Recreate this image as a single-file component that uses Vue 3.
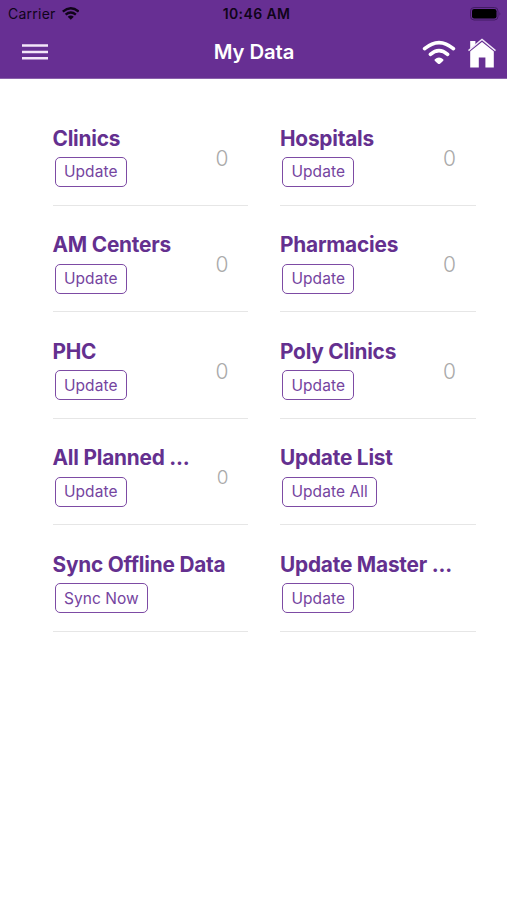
<script setup>
const items = [
  { title: 'Clinics', action: 'Update', count: 0 },
  { title: 'Hospitals', action: 'Update', count: 0 },
  { title: 'AM Centers', action: 'Update', count: 0 },
  { title: 'Pharmacies', action: 'Update', count: 0 },
  { title: 'PHC', action: 'Update', count: 0 },
  { title: 'Poly Clinics', action: 'Update', count: 0 },
  { title: 'All Planned ...', action: 'Update', count: 0, small: true },
  { title: 'Update List', action: 'Update All' },
  { title: 'Sync Offline Data', action: 'Sync Now' },
  { title: 'Update Master ...', action: 'Update' },
]
</script>

<template>
  <div class="screen">
    <header class="header">
      <div class="status">
        <div class="carrier">
          <span>Carrier</span>
          <svg class="signal" viewBox="0 0 34 25">
            <path d="M1.5 9Q17 -4 32.5 9M7 15Q17 6.6 27 15" fill="none" stroke="currentColor" stroke-width="4.8" />
            <path d="M11 19Q17 14 23 19L17 25Z" fill="currentColor" />
          </svg>
        </div>
        <span class="time">10:46 AM</span>
        <svg class="battery" viewBox="0 0 32 14">
          <rect x="0.5" y="0.5" width="27.5" height="12.5" rx="3.6" fill="none" stroke="#431c64" />
          <rect x="2" y="2" width="24.5" height="9.5" rx="2.2" fill="#000" />
          <path d="M29.5 4.8Q31.2 6.8 29.5 8.8Z" fill="#431c64" />
        </svg>
      </div>
      <nav class="bar">
        <button class="menu" aria-label="Menu">
          <svg viewBox="0 0 26 18">
            <path d="M0 2.4H26M0 8.9H26M0 15.2H26" fill="none" stroke="#f3e6f9" stroke-width="2.5" />
          </svg>
        </button>
        <h1>My Data</h1>
        <div class="tools">
          <svg class="wifi" viewBox="0 0 34 25">
            <path d="M2.6 8.7Q17 -3.6 31.4 8.7M8.4 14.4Q17 6.8 25.6 14.4" fill="none" stroke="currentColor" stroke-width="3.6" stroke-linecap="round" />
            <path d="M12.6 19.4Q17 15.8 21.4 19.4Q21.8 20.2 21 21L18 23.7Q17 24.4 16 23.7L13 21Q12.2 20.2 12.6 19.4Z" fill="currentColor" />
          </svg>
          <svg class="home" viewBox="0 0 28 30">
            <path d="M2.2 15V3H7.4V8L14 3L25.8 13V29.5H17.4V19.5H10.8V29.5H2.2Z" fill="currentColor" />
            <path d="M0.5 13.6L14 2.8L27.5 13.6" fill="none" stroke="#672f93" stroke-width="1.8" />
            <path d="M0.5 12.6L14 1.5L27.5 12.6" fill="none" stroke="#f3eaf8" stroke-width="1.4" />
          </svg>
        </div>
      </nav>
    </header>

    <main class="grid">
      <section v-for="item in items" :key="item.title" class="cell">
        <div class="info">
          <h2>{{ item.title }}</h2>
          <button class="action">{{ item.action }}</button>
        </div>
        <span v-if="item.count !== undefined" class="count" :class="{ small: item.small }">{{ item.count }}</span>
      </section>
    </main>
  </div>
</template>

<style>
body {
  background: #fff;
}
</style>

<style scoped>
.screen {
  height: 900px;
  overflow: hidden;
  background: #fff;
  font-family: Inter, "Liberation Sans", sans-serif;
}

button {
  margin: 0;
  padding: 0;
  border: 0;
  background: none;
  font-family: inherit;
}

.header {
  height: 79px;
  background: #672f93;
  box-sizing: border-box;
  border-bottom: 1px solid #8a61aa;
  color: #fff;
}

.status {
  display: grid;
  grid-template-columns: 1fr auto 1fr;
  align-items: center;
  height: 27px;
  padding: 0 5px 0 8px;
  color: #100419;
  font-size: 14px;
}

.carrier {
  display: flex;
  align-items: center;
  gap: 6px;
  letter-spacing: 0.25px;
}

.signal {
  width: 17.5px;
  height: 12.8px;
}

.time {
  margin-left: 3px;
  font-weight: 600;
  letter-spacing: 0.4px;
}

.battery {
  width: 32px;
  height: 14px;
  justify-self: end;
}

.bar {
  display: grid;
  grid-template-columns: 1fr auto 1fr;
  align-items: center;
  height: 50px;
  padding: 0 11px 0 22px;
}

.menu {
  width: 26px;
  height: 18px;
}

.menu svg {
  display: block;
  width: 26px;
  height: 18px;
}

h1 {
  margin: 0 10px 0 0;
  font-size: 20.3px;
  font-weight: 600;
  letter-spacing: -0.1px;
  line-height: 26px;
}

.tools {
  display: flex;
  align-items: center;
  justify-content: flex-end;
  gap: 12px;
}

.wifi {
  width: 34px;
  height: 25px;
}

.home {
  width: 28px;
  height: 30px;
  margin-top: 1px;
}

.grid {
  display: grid;
  grid-template-columns: 195.5px 195.5px;
  column-gap: 32px;
  grid-auto-rows: 106.6px;
  padding: 20px 0 0 52.5px;
}

.cell {
  display: flex;
  justify-content: space-between;
  box-sizing: border-box;
  padding: 26.7px 19.5px 0 0;
  border-bottom: 1px solid #e6e6e6;
}

h2 {
  margin: 0;
  color: #64308f;
  font-size: 20.8px;
  font-weight: 650;
  letter-spacing: -0.2px;
  line-height: 26px;
  white-space: nowrap;
}

.action {
  display: block;
  box-sizing: border-box;
  height: 30px;
  margin: 5.3px 0 0 2px;
  padding: 0 8.5px;
  border: 1.5px solid #7d4ba4;
  border-radius: 5px;
  color: #7544a0;
  font-size: 15.5px;
  letter-spacing: 0.05px;
  line-height: 27px;
  white-space: nowrap;
}

.count {
  margin-top: 20px;
  color: #aaa;
  font-size: 21px;
  font-weight: 300;
  line-height: 26px;
}

.count.small {
  font-size: 19px;
}
</style>
